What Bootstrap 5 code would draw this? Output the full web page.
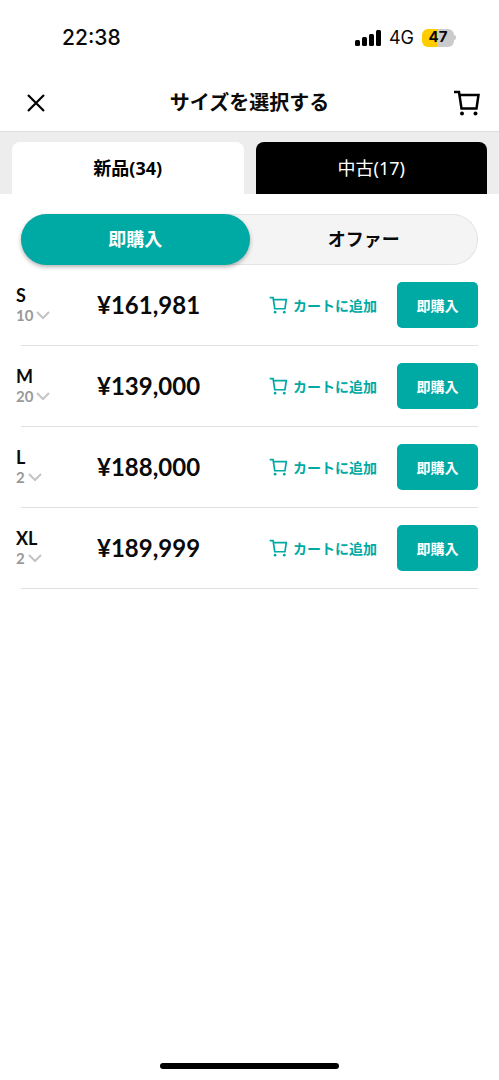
<!DOCTYPE html>
<html lang="ja">
<head>
<meta charset="utf-8">
<meta name="viewport" content="width=device-width, initial-scale=1">
<title>サイズを選択する</title>
<link href="https://cdn.jsdelivr.net/npm/bootstrap@5.3.0/dist/css/bootstrap.min.css" rel="stylesheet">
<style>
  :root { --teal: #00aaa4; }
  body { font-family: "Noto Sans", "Noto Sans CJK JP", sans-serif; color: #0a0a0a; background: #fff; }
  svg { display: block; flex: none; }
  .status-bar { height: 75px; padding: 0 43px 0 62px; font-family: Inter, sans-serif; }
  .status-time { font-size: 21px; font-weight: 500; }
  .status-net { font-size: 18px; }
  .battery { width: 32px; height: 18px; border-radius: 6px; font-size: 15px; font-weight: 700; background: linear-gradient(90deg, #fc0 47%, #cbcbcd 47%); }
  .battery-tip { width: 2px; height: 5px; border-radius: 0 2px 2px 0; background: #cbcbcd; }
  .title-bar { height: 56px; padding: 0 18px; }
  .title-bar h1 { font-size: 20px; font-weight: 700; }
  .title-bar .btn { width: 36px; color: #000; }
  .tabs-band { background: #ededed; border-top: 1px solid #dedede; padding: 10px 12px 0; gap: 12px; }
  .tabs-band .nav-link { height: 52px; padding: 0; border: 0; border-radius: 8px 8px 0 0; font-size: 18px; color: #fff; background: #000; }
  .tabs-band .nav-link.active { color: #000; background: #fff; font-weight: 700; }
  .mode-switch { height: 51px; margin: 20px 21px 0; background: #f4f4f4; box-shadow: inset 0 0 0 1px #e4e4e4; }
  .mode-switch .btn { font-size: 18px; font-weight: 700; color: #0a0a0a; border: 0; }
  .mode-switch .btn.active { color: #fff; background: var(--teal); box-shadow: 0 2px 4px rgba(0, 0, 0, .3); }
  .size-row { height: 81px; margin: 0 21px; border-bottom: 1px solid #e0e0e0; }
  .size-col { width: 81px; margin-left: -5px; }
  .size-name { font-family: Lato, sans-serif; font-size: 18px; font-weight: 700; line-height: 20px; }
  .size-count { font-family: Lato, sans-serif; font-size: 15px; font-weight: 700; line-height: 20px; gap: 3px; color: #999; }
  .price { font-family: Lato, sans-serif; font-size: 24px; font-weight: 700; }
  .cart-add { font-size: 14px; font-weight: 700; gap: 5px; color: var(--teal); margin-right: 20px; }
  .buy { width: 81px; height: 46px; font-size: 14px; font-weight: 700; color: #fff; background: var(--teal); border-radius: 5px; }
  .buy:hover { color: #fff; background: #00958f; }
  .home-bar { width: 36%; height: 6px; margin: auto auto 11px; border-radius: 3px; background: #000; }
</style>
</head>
<body>
<svg width="0" height="0" class="position-absolute" aria-hidden="true">
  <symbol id="cart" viewBox="0 0 28 26">
    <path d="M1 2h5l2.500 16.500h15L25.500 5H6.500" fill="none" stroke="currentColor" stroke-width="2.500"/>
    <circle cx="9" cy="23.500" r="2" fill="currentColor"/><circle cx="22.500" cy="23.500" r="2" fill="currentColor"/>
  </symbol>
</svg>
<div class="d-flex flex-column min-vh-100">
  <div class="status-bar d-flex align-items-center justify-content-between">
    <span class="status-time">22:38</span>
    <div class="d-flex align-items-center">
      <svg width="26" height="16" viewBox="0 0 26 16" class="me-2" aria-hidden="true"><rect y="10" width="5" height="6" rx="1.500"/><rect x="7" y="7" width="5" height="9" rx="1.500"/><rect x="14" y="4" width="5" height="12" rx="1.500"/><rect x="21" width="5" height="16" rx="1.500"/></svg>
      <span class="status-net me-2">4G</span>
      <span class="battery d-flex align-items-center justify-content-center">47</span>
      <span class="battery-tip"></span>
    </div>
  </div>
  <header class="title-bar d-flex align-items-center justify-content-between">
    <button type="button" class="btn border-0 p-0 d-flex justify-content-center" aria-label="閉じる"><svg width="24" height="24" viewBox="0 0 24 24" aria-hidden="true"><path d="M4 4l16 16M20 4L4 20" stroke="currentColor" stroke-width="2.200"/></svg></button>
    <h1 class="mb-0">サイズを選択する</h1>
    <button type="button" class="btn border-0 p-0 d-flex justify-content-end" aria-label="カート"><svg width="28" height="26" aria-hidden="true"><use href="#cart"/></svg></button>
  </header>
  <nav class="tabs-band nav nav-fill flex-nowrap" role="tablist">
    <button type="button" class="nav-link active w-50" role="tab" aria-selected="true">新品(34)</button>
    <button type="button" class="nav-link w-50" role="tab" aria-selected="false">中古(17)</button>
  </nav>
  <main>
    <div class="mode-switch d-flex rounded-pill">
      <button type="button" class="btn active rounded-pill w-50" aria-pressed="true">即購入</button>
      <button type="button" class="btn rounded-pill w-50" aria-pressed="false">オファー</button>
    </div>
    <div id="sizes"></div>
  </main>
  <div class="home-bar"></div>
</div>
<script src="https://cdn.jsdelivr.net/npm/bootstrap@5.3.0/dist/js/bootstrap.bundle.min.js"></script>
<script>
  const sizes = [['S', 10, '161,981'], ['M', 20, '139,000'], ['L', 2, '188,000'], ['XL', 2, '189,999']];
  document.getElementById('sizes').innerHTML = sizes.map(([name, count, price]) => `
    <div class="size-row d-flex align-items-center">
      <div class="size-col">
        <div class="size-name">${name}</div>
        <button type="button" class="btn border-0 p-0 size-count d-flex align-items-center">${count}<svg width="14" height="10" viewBox="0 0 14 10" aria-hidden="true"><path d="M1 2l6 6 6-6" fill="none" stroke="#c4c4c4" stroke-width="2"/></svg></button>
      </div>
      <div class="price me-auto">¥${price}</div>
      <button type="button" class="btn border-0 p-0 cart-add d-flex align-items-center"><svg width="19" height="18" aria-hidden="true"><use href="#cart"/></svg>カートに追加</button>
      <button type="button" class="btn border-0 p-0 buy">即購入</button>
    </div>`).join('');
</script>
</body>
</html>
